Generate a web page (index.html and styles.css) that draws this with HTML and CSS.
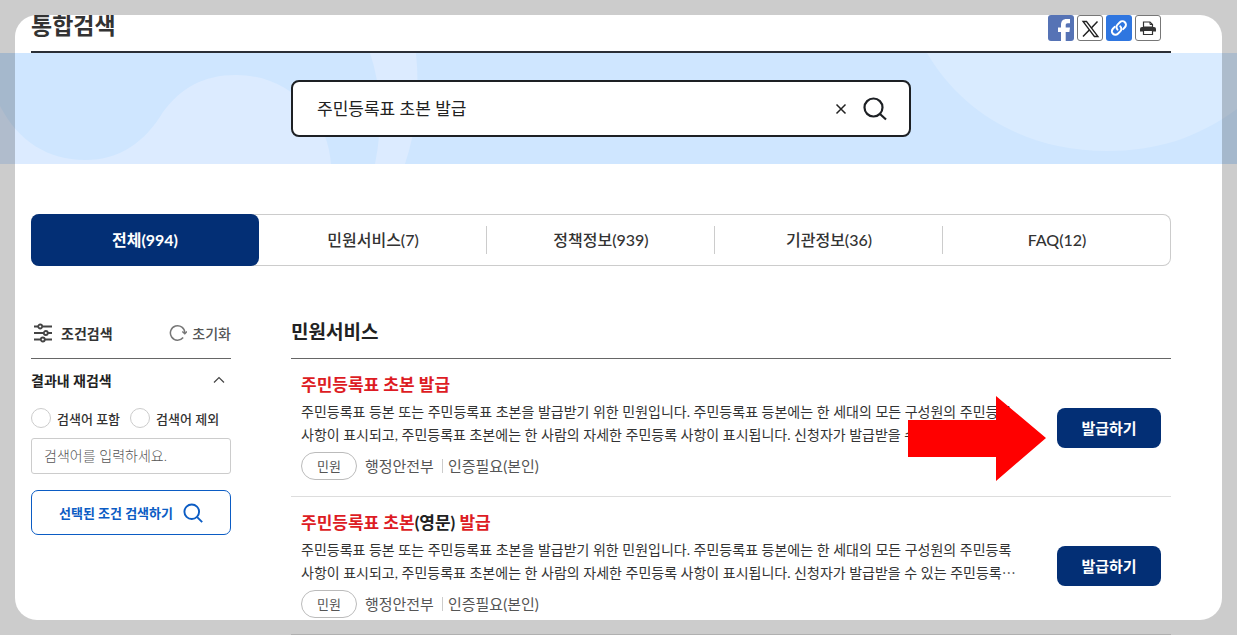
FILE: index.html
```html
<!DOCTYPE html>
<html lang="ko">
<head>
<meta charset="utf-8">
<meta name="viewport" content="width=device-width, initial-scale=1">
<title>통합검색</title>
<link rel="stylesheet" href="styles.css">
</head>
<body>
<div class="page">
  <header class="page-head">
    <div class="head-row">
      <h1 class="page-title">통합검색</h1>
      <div class="share">
        <a class="share-link share-fb" href="#" aria-label="페이스북">
          <svg viewBox="0 0 26 26"><path fill="#fff" d="M13 26V17h-3v-4.500h3V10C13 6 15 4 18.500 4H22V8.300h-2.200c-1.700 0-2.100.8-2.100 2v2.200H22l-.6 4.500h-3.700v9z"/></svg>
        </a>
        <a class="share-link" href="#" aria-label="X">
          <svg viewBox="0 0 24 24" fill="none" stroke="#222"><path stroke-width="1.300" d="M5 5.500h3.500L20 20.500h-3.600z"/><path stroke-width="1.500" d="M19.500 5.500 13.300 12M11.300 14 5 20.500"/></svg>
        </a>
        <a class="share-link share-url" href="#" aria-label="링크 복사">
          <svg viewBox="0 0 26 26" fill="none" stroke="#fff" stroke-width="2" stroke-linecap="round"><path d="M11.500 14.600a3.500 3.500 0 0 1 0-5l2.400-2.300a3.500 3.500 0 0 1 5 5l-1.800 1.800"/><path d="M14.300 11.400a3.500 3.500 0 0 1 0 5l-2.400 2.300a3.500 3.500 0 0 1-5-5l1.800-1.800"/></svg>
        </a>
        <a class="share-link" href="#" aria-label="인쇄">
          <svg viewBox="0 0 24 24"><path fill="#333" d="M6 11h12q2 0 2 2v2.500H4V13q0-2 2-2z"/><path fill="#fff" stroke="#333" stroke-width="1.200" d="M7.500 11V6H14l2.500 2.500V11zM7.500 14.500h9v4h-9z"/><path fill="none" stroke="#333" d="M14 6v2.500h2.500"/></svg>
        </a>
      </div>
    </div>
  </header>

  <section class="banner">
    <svg class="banner-art" viewBox="0 0 1237 111" preserveAspectRatio="none" aria-hidden="true">
      <path fill="#dcebff" d="M0 53C18 88 48 107 85 107c35 0 60-18 78-48 18-24 40-37 73-37 54 0 92 42 95 89H0z"/>
      <path fill="#dcebff" d="M370 0h46q6 60-11 111h-30q12-60-5-111z"/>
      <path fill="#d9ebff" d="M927 0h310v56c-40 29-80 42-130 42-80 0-145-38-180-98z"/>
    </svg>
    <form class="search" role="search">
      <input class="search-input" type="text" value="주민등록표 초본 발급" aria-label="검색어">
      <button class="icon-btn" type="button" aria-label="지우기">
        <svg class="ico-x" viewBox="0 0 12 12" fill="none" stroke="#222" stroke-width="1.500"><path d="M1.500 1.500l9 9M10.500 1.500l-9 9"/></svg>
      </button>
      <button class="icon-btn" type="button" aria-label="검색">
        <svg class="ico-search" viewBox="0 0 24 24" fill="none" stroke="#1d2024" stroke-width="2.200"><circle cx="10.500" cy="10.500" r="9"/><path d="M17 17l6 5.500"/></svg>
      </button>
    </form>
  </section>

  <nav class="tabs">
    <a class="tab tab-on" href="#">전체(994)</a>
    <a class="tab" href="#">민원서비스(7)</a>
    <a class="tab" href="#">정책정보(939)</a>
    <a class="tab" href="#">기관정보(36)</a>
    <a class="tab" href="#">FAQ(12)</a>
  </nav>

  <div class="columns">
    <aside class="filter">
      <div class="filter-head">
        <h2 class="filter-title">
          <svg class="ico-filter" viewBox="0 0 20 20" fill="none" stroke="#444" stroke-width="1.800"><path d="M1 3.500h4M9.500 3.500H19M1 10h9.500M15 10h4M1 16.500h6.500M12 16.500h7"/><circle cx="7.200" cy="3.500" r="2"/><circle cx="12.800" cy="10" r="2"/><circle cx="9.800" cy="16.500" r="2"/></svg>
          조건검색
        </h2>
        <button class="reset" type="button">
          <svg class="ico-reset" viewBox="0 0 18 18" fill="none" stroke="#777" stroke-width="1.500"><path d="M14.200 13.500A7.200 7.200 0 1 1 15.800 9"/><path d="M13.300 7.500l2.500 2.300L18 7.500"/></svg>
          초기화
        </button>
      </div>
      <button class="fold" type="button">결과내 재검색
        <svg class="ico-up" viewBox="0 0 12 8" fill="none" stroke="#444" stroke-width="1.200"><path d="M1 6.500l5-5 5 5"/></svg>
      </button>
      <div class="radios">
        <label class="radio"><input type="radio" name="scope">검색어 포함</label>
        <label class="radio"><input type="radio" name="scope">검색어 제외</label>
      </div>
      <input class="refine-input" type="text" placeholder="검색어를 입력하세요." aria-label="결과내 검색어">
      <button class="refine-btn" type="button">선택된 조건 검색하기
        <svg class="ico-small" viewBox="0 0 24 24" fill="none" stroke="#0b5cc4" stroke-width="2.300"><circle cx="10.500" cy="10.500" r="8.800"/><path d="M17 17l6 6"/></svg>
      </button>
    </aside>

    <main class="results">
      <h2 class="results-title">민원서비스</h2>
      <article class="item">
        <div class="item-body">
          <h3 class="item-title"><a href="#"><mark>주민등록표</mark> <mark>초본</mark> <mark>발급</mark></a></h3>
          <p class="item-desc">주민등록표 등본 또는 주민등록표 초본을 발급받기 위한 민원입니다. 주민등록표 등본에는 한 세대의 모든 구성원의 주민등록 사항이 표시되고, 주민등록표 초본에는 한 사람의 자세한 주민등록 사항이 표시됩니다. 신청자가 발급받을 수 있는 주민등록⋯</p>
          <div class="meta"><span class="badge">민원</span><span>행정안전부</span><span class="meta-next">인증필요(본인)</span></div>
        </div>
        <button class="issue" type="button">발급하기</button>
        <svg class="arrow" viewBox="0 0 138 85" aria-hidden="true"><path fill="#f00" d="M0 24h88V0l50 42-50 43V61H0z"/></svg>
      </article>
      <article class="item">
        <div class="item-body">
          <h3 class="item-title"><a href="#"><mark>주민등록표</mark> <mark>초본</mark>(영문) <mark>발급</mark></a></h3>
          <p class="item-desc">주민등록표 등본 또는 주민등록표 초본을 발급받기 위한 민원입니다. 주민등록표 등본에는 한 세대의 모든 구성원의 주민등록 사항이 표시되고, 주민등록표 초본에는 한 사람의 자세한 주민등록 사항이 표시됩니다. 신청자가 발급받을 수 있는 주민등록⋯</p>
          <div class="meta"><span class="badge">민원</span><span>행정안전부</span><span class="meta-next">인증필요(본인)</span></div>
        </div>
        <button class="issue" type="button">발급하기</button>
      </article>
    </main>
  </div>
</div>
<div class="frame" aria-hidden="true"></div>
</body>
</html>
```
FILE: styles.css
```css
* { box-sizing: border-box; }
html, body { height: 100%; }
body {
  margin: 0;
  overflow: hidden;
  background: #fff;
  color: #222;
  font-family: Lato, "Noto Sans CJK KR", sans-serif;
  font-size: 14px;
  word-break: keep-all;
}
h1, h2, h3, p { margin: 0; }
a { color: inherit; text-decoration: none; }
button, input { font: inherit; color: inherit; }
button { padding: 0; border: 0; background: none; cursor: pointer; }
svg { display: block; flex: none; }

/* translucent rounded frame over the page edges */
.frame {
  position: fixed;
  inset: 15px;
  border-radius: 22px;
  box-shadow: 0 0 0 40px rgba(0, 0, 0, .2);
  pointer-events: none;
}

.page { padding-top: 15px; }

.page-head { padding: 0 66px 0 31px; }
.head-row {
  display: flex;
  justify-content: space-between;
  align-items: flex-start;
  height: 38px;
  padding-right: 10px;
  overflow: hidden;
  border-bottom: 2px solid #2b2f36;
}
.page-title { font-size: 23px; line-height: 20px; color: #333; }
.share { display: flex; gap: 3px; }
.share-link {
  width: 26px;
  height: 26px;
  border: 1px solid #777;
  border-radius: 3px;
  overflow: hidden;
}
.share-fb { border: 0; background: #5673b5; }
.share-url { border: 0; background: #2f76e0; }

.banner {
  position: relative;
  padding: 27px 326px 27px 291px;
  background: #cfe6ff;
}
.banner-art { position: absolute; inset: 0; width: 100%; height: 100%; }
.search {
  position: relative;
  display: flex;
  align-items: center;
  gap: 16px;
  height: 57px;
  padding: 0 22px 0 24px;
  border: 2px solid #1d2024;
  border-radius: 8px;
  background: #fff;
}
.search-input {
  flex: 1;
  min-width: 0;
  padding: 0 0 2px;
  border: 0;
  outline: 0;
  background: none;
  font-size: 17px;
}
.ico-x { width: 12px; height: 12px; }
.ico-search { width: 24px; height: 24px; }

.tabs {
  display: flex;
  height: 52px;
  margin: 50px 66px 0 31px;
  border-radius: 8px;
  box-shadow: inset 0 0 0 1px #ccc;
}
.tab {
  display: flex;
  flex: 1;
  align-items: center;
  justify-content: center;
  padding-bottom: 2px;
  font-size: 16px;
  font-weight: 500;
  color: #333;
}
.tab:not(.tab-on) {
  background: linear-gradient(#ccc, #ccc) right center / 1px 28px no-repeat;
}
.tab:not(.tab-on):last-child { background: none; }
.tab-on {
  border-radius: 8px;
  background: #032f75;
  color: #fff;
  font-weight: 700;
}

.columns {
  display: flex;
  gap: 60px;
  padding: 48px 66px 0 31px;
}
.filter { width: 200px; flex: none; }
.filter-head {
  display: flex;
  align-items: center;
  justify-content: space-between;
  height: 45px;
  padding: 0 0 6px 2px;
  border-bottom: 1px solid #666;
}
.filter-title {
  display: flex;
  align-items: center;
  gap: 8px;
  font-size: 14px;
  color: #333;
}
.ico-filter { width: 20px; height: 20px; }
.reset {
  display: flex;
  align-items: center;
  gap: 5px;
  font-weight: 500;
  color: #555;
}
.ico-reset { width: 18px; height: 18px; }
.fold {
  display: flex;
  align-items: center;
  justify-content: space-between;
  width: 100%;
  height: 44px;
  padding: 0 6px 2px 0;
  font-size: 14px;
  font-weight: 700;
}
.ico-up { width: 12px; height: 8px; }
.radios {
  display: flex;
  gap: 10px;
  height: 30px;
  align-items: center;
}
.radio {
  display: flex;
  align-items: center;
  gap: 6px;
  font-size: 13px;
  font-weight: 500;
  color: #333;
  white-space: nowrap;
}
.radio input {
  appearance: none;
  width: 20px;
  height: 20px;
  margin: 0;
  border: 1px solid #ccc;
  border-radius: 50%;
  background: #fff;
}
.refine-input {
  width: 100%;
  height: 36px;
  margin-top: 5px;
  padding: 0 12px 2px;
  border: 1px solid #ccc;
  border-radius: 3px;
  font-weight: 300;
}
.refine-input::placeholder { color: #555; opacity: 1; }
.refine-btn {
  display: flex;
  align-items: center;
  justify-content: center;
  gap: 10px;
  width: 100%;
  height: 45px;
  margin-top: 16px;
  border: 1px solid #0b5cc4;
  border-radius: 7px;
  font-size: 13px;
  font-weight: 700;
  color: #0b5cc4;
}
.ico-small { width: 20px; height: 20px; }

.results { flex: 1; min-width: 0; }
.results-title {
  height: 45px;
  border-bottom: 1px solid #666;
  font-size: 19px;
  line-height: 36px;
}
.item {
  position: relative;
  display: flex;
  align-items: center;
  gap: 23px;
  padding: 14px 10px;
  border-bottom: 1px solid #ddd;
}
.item-body { flex: 1; min-width: 0; padding-bottom: 2px; }
.item-title { font-size: 17px; line-height: 24px; }
.item-title mark { background: none; color: #dd1c24; }
.item-desc {
  margin-top: 3px;
  line-height: 23px;
  color: #333;
}
.meta {
  display: flex;
  align-items: center;
  gap: 8px;
  margin-top: 6px;
  font-size: 15px;
  line-height: 28px;
  color: #555;
}
.badge {
  padding: 0 15px;
  border: 1px solid #bbb;
  border-radius: 14px;
  font-size: 13px;
  line-height: 26px;
}
.meta-next {
  padding-left: 6px;
  background: linear-gradient(#ccc, #ccc) left center / 1px 14px no-repeat;
}
.issue {
  width: 104px;
  height: 40px;
  border-radius: 8px;
  background: #032f75;
  color: #fff;
  font-size: 15px;
  font-weight: 700;
}
/* pointer drawn over the first result */
.arrow {
  position: absolute;
  top: 37px;
  right: 125px;
  width: 138px;
  height: 85px;
}
```
